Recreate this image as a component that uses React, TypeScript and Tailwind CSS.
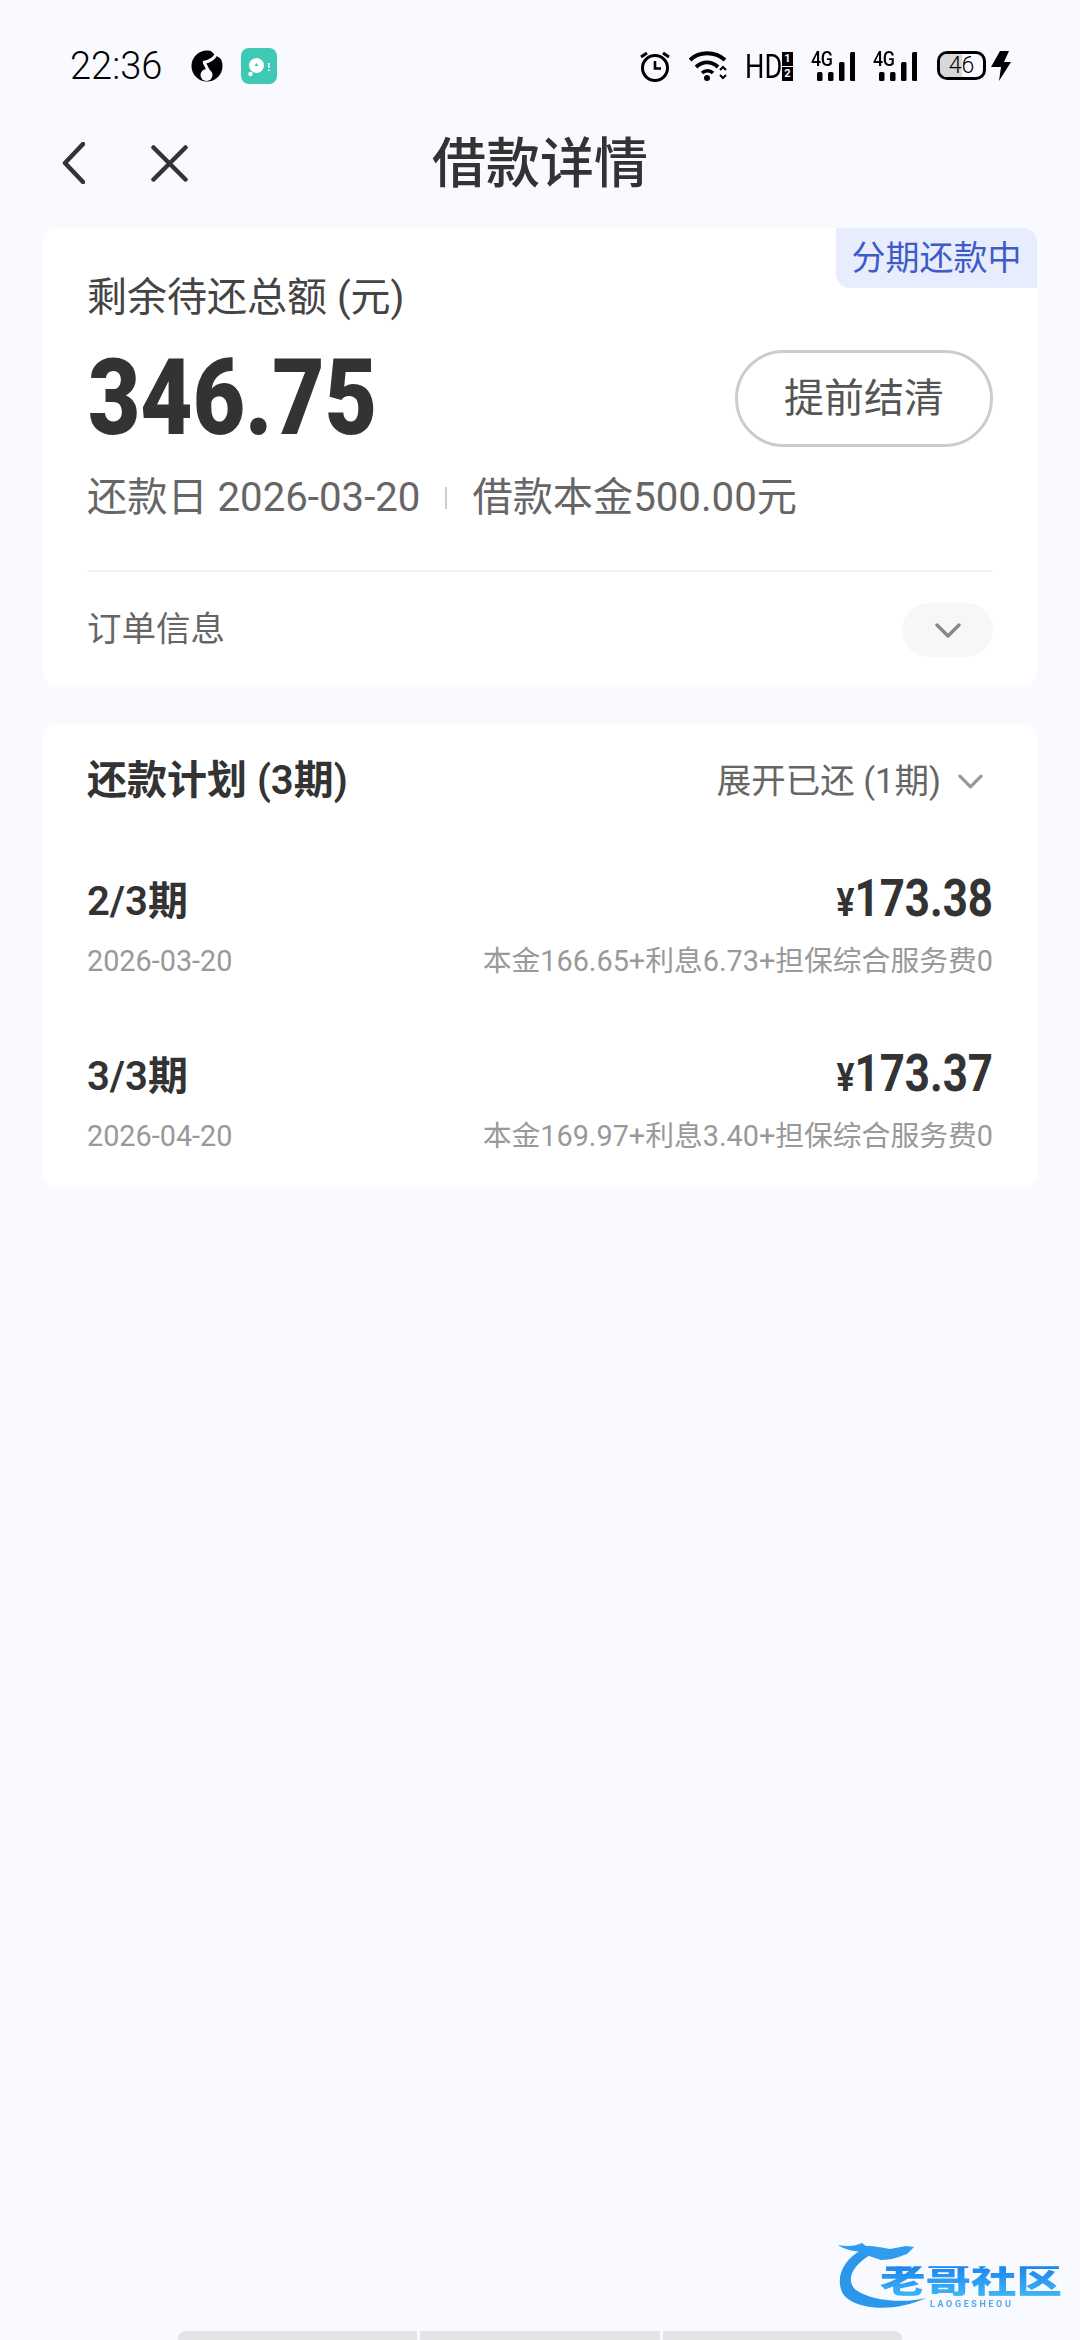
const font = "font-['Roboto','Noto_Sans_CJK_SC',sans-serif]";

function Signal() {
  return (
    <div className="relative w-[44px] h-[30px]">
      <span className="absolute left-0 top-[-3px] text-[21px] leading-[22px] font-medium tracking-[-0.5px] scale-x-[0.85] origin-left text-black">4G</span>
      <svg width="44" height="30" viewBox="0 0 44 30" className="absolute left-0 top-0">
        <rect x="6" y="21" width="5.5" height="9" rx="1.5" fill="#000" />
        <rect x="17" y="21" width="5.5" height="9" rx="1.5" fill="#000" />
        <rect x="28" y="11" width="5.5" height="19" rx="1.5" fill="#000" />
        <rect x="39" y="1" width="5.5" height="29" rx="1.5" fill="#000" />
      </svg>
    </div>
  );
}

function StatusBar() {
  return (
    <div className="h-[132px] pl-[70px] pr-[69px] pt-[48px] flex items-start justify-between text-black">
      <div className="flex items-center h-[36px]">
        <span className="w-[121px] text-[38px] leading-[36px] font-light">22:36</span>
        <svg width="32" height="32" viewBox="0 0 32 32">
          <circle cx="16" cy="16" r="15.5" fill="#000" />
          <path d="M19 0h13v10L24 5z" fill="#f8faff" />
          <path d="M12 12.5C18 12 23 9 26 3" fill="none" stroke="#f8faff" strokeWidth="3" />
          <path d="M13 12l6.5 13" fill="none" stroke="#f8faff" strokeWidth="3" />
          <circle cx="15.5" cy="25" r="6" fill="#f8faff" />
        </svg>
        <div className="ml-[18px] w-[36px] h-[36px] rounded-[8px] bg-[#3ec9b5]">
          <svg width="36" height="36" viewBox="0 0 36 36">
            <circle cx="15.5" cy="17.5" r="7.5" fill="#fff" />
            <path d="M13.5 18l2-3 2 3z" fill="#3ec9b5" />
            <circle cx="9.5" cy="26" r="2.2" fill="#fff" />
            <rect x="27" y="15" width="1.6" height="5" fill="#fff" />
            <rect x="27" y="21.5" width="1.6" height="1.6" fill="#fff" />
          </svg>
        </div>
      </div>
      <div className="flex items-start h-[36px] pt-[3px]">
        <svg width="30" height="31" viewBox="0 0 30 31" fill="none" stroke="#000" strokeWidth="3">
          <circle cx="15" cy="17" r="12.5" />
          <path d="M15 10v7.5h6" strokeWidth="2.6" />
          <path d="M1 6l6-4M29 6l-6-4" strokeWidth="3" />
        </svg>
        <svg width="40" height="30" viewBox="0 0 40 30" fill="none" stroke="#000" className="ml-[19px]">
          <path d="M1 9C10 0 26 0 36 9" strokeWidth="4" />
          <path d="M7 16C14 10 22 10 29 16" strokeWidth="4" />
          <path d="M13 22c3-3 8-3 11 0" strokeWidth="3.5" />
          <circle cx="18" cy="27" r="3" fill="#000" stroke="none" />
          <path d="M31 19l3-3 3 3M31 24l3 3 3-3" strokeWidth="2" />
        </svg>
        <div className="ml-[16px] w-[48px] h-[30px] flex items-center">
          <span className="w-[37px] text-[34px] leading-[30px] font-normal scale-x-[0.8] origin-left">HD</span>
          <div className="w-[11px] flex flex-col gap-[1px]">
            <span className="h-[14px] bg-black text-white text-[11px] leading-[14px] font-bold text-center">1</span>
            <span className="h-[14px] bg-black text-white text-[11px] leading-[14px] font-bold text-center">2</span>
          </div>
        </div>
        <div className="ml-[18px]"><Signal /></div>
        <div className="ml-[18px]"><Signal /></div>
        <div className="ml-[20px] relative w-[49px] h-[29px] rounded-[10px] border-[3px] border-black overflow-hidden flex items-center justify-center">
          <div className="absolute left-0 top-0 bottom-0 w-[22px] bg-[#d8d8d8]" />
          <span className="relative text-[23px] leading-[23px] font-light">46</span>
        </div>
        <svg width="20" height="30" viewBox="0 0 20 30" className="ml-[5px]">
          <path d="M9 0h9l-5 11h7L8 30l2-14H0z" fill="#000" />
        </svg>
      </div>
    </div>
  );
}

function NavBar() {
  return (
    <div className="relative h-[96px] flex justify-center">
      <div className="absolute left-[62px] top-[10px] flex items-center gap-[66px]">
        <svg width="23" height="42" viewBox="0 0 23 42" fill="none" stroke="#333" strokeWidth="4.5" strokeLinecap="round" strokeLinejoin="round">
          <path d="M21 2L3 21l18 19" />
        </svg>
        <svg width="37" height="37" viewBox="0 0 37 37" fill="none" stroke="#333" strokeWidth="4.5" strokeLinecap="round">
          <path d="M2.5 2.5l32 32M34.5 2.5l-32 32" />
        </svg>
      </div>
      <h1 className="text-[54px] leading-[66px] font-medium text-[#333]">借款详情</h1>
    </div>
  );
}

function Chevron({ color, width, height }: { color: string; width: number; height: number }) {
  return (
    <svg width={width} height={height} viewBox="0 0 26 15" fill="none" stroke={color} strokeWidth="3.4" strokeLinecap="round" strokeLinejoin="round">
      <path d="M2 2l11 11L24 2" />
    </svg>
  );
}

function SummaryCard() {
  return (
    <div className="relative mx-[43px] h-[459px] rounded-[14px] bg-white px-[44px] overflow-hidden">
      <div className="absolute right-0 top-0 w-[201px] h-[60px] bg-[#e8edfd] rounded-bl-[14px] flex items-center justify-center text-[34px] leading-[40px] text-[#3f5bc9]">
        分期还款中
      </div>
      <div className="pt-[47px] text-[40px] leading-[46px] text-[#444]">剩余待还总额 (元)</div>
      <div className="flex items-center justify-between mt-[29px]">
        <span className="text-[105px] leading-[97px] font-black text-[#333] scale-x-[0.86] origin-left translate-x-[1px]">346.75</span>
        <button className="w-[258px] h-[97px] rounded-full border-[3px] border-[#ccc] text-[40px] text-[#555]">
          提前结清
        </button>
      </div>
      <div className="flex items-center mt-[28px] h-[46px] text-[40.2px] text-[#666]">
        <span>还款日 2026-03-20</span>
        <span className="mx-[25px] w-[2px] h-[22px] bg-[#ccc]" />
        <span>借款本金500.00元</span>
      </div>
      <div className="mt-[49px] h-[2px] bg-[#f0f0f0]" />
      <div className="flex items-center justify-between mt-[31px]">
        <span className="text-[34.5px] leading-[52px] text-[#666] -translate-y-[1px]">订单信息</span>
        <div className="w-[91px] h-[54px] rounded-full bg-[#f7f7f7] flex items-center justify-center">
          <Chevron color="#888" width={26} height={15} />
        </div>
      </div>
    </div>
  );
}

const plans = [
  { period: "2/3期", amount: "173.38", date: "2026-03-20", detail: "本金166.65+利息6.73+担保综合服务费0" },
  { period: "3/3期", amount: "173.37", date: "2026-04-20", detail: "本金169.97+利息3.40+担保综合服务费0" },
];

function PlanCard() {
  return (
    <div className="mx-[43px] mt-[37px] h-[463px] rounded-[14px] bg-white px-[44px]">
      <div className="flex items-center justify-between pt-[34px] h-[80px]">
        <span className="text-[40px] leading-[46px] font-semibold text-[#333]">还款计划 (3期)</span>
        <div className="flex items-center text-[34.5px] leading-[46px] text-[#666]">
          <span>展开已还 (1期)</span>
          <span className="ml-[17px] mr-[10px]"><Chevron color="#999" width={25} height={15} /></span>
        </div>
      </div>
      {plans.map((p, i) => (
        <div key={p.period} className={i === 0 ? "mt-[67px]" : "mt-[61px]"}>
          <div className="flex items-center justify-between h-[50px]">
            <span className="text-[40px] font-semibold text-[#333] translate-y-[6px]">{p.period}</span>
            <span className="text-[51px] font-bold text-[#333] scale-x-[0.86] origin-right translate-y-[3px]">
              <span className="text-[39px]">¥</span>
              {p.amount}
            </span>
          </div>
          <div className="flex items-center justify-between h-[40px] mt-[21px] text-[28.8px] text-[#999]">
            <span>{p.date}</span>
            <span>{p.detail}</span>
          </div>
          <div className="h-[3px]" />
        </div>
      ))}
    </div>
  );
}

function Watermark() {
  return (
    <div className="absolute left-[838px] top-[2242px] w-[226px] h-[70px] blur-[0.6px]">
      <svg width="120" height="70" viewBox="0 0 120 70" className="absolute left-0 top-0">
        <path d="M24 8C7 16 -3 34 4 50c8 17 50 22 84 6-26 6-56 2-70-8C8 40 12 24 34 12z" fill="#2b97ea" />
        <path d="M0 3c10 2 18 1 24-2l4 3c12 0 16 2 24 3l16-3 8 1-7 7c-8 3-16 6-26 6l-12-4-8-4C14 9 6 7 0 3z" fill="#2f9cf0" />
      </svg>
      <span className="absolute left-[42px] top-[20px] whitespace-nowrap text-[45.5px] leading-[38px] font-black scale-y-[0.78] bg-linear-to-b from-[#1d85ee] to-[#3fb4f7] bg-clip-text text-transparent">老哥社区</span>
      <span className="absolute left-[92px] top-[57px] whitespace-nowrap text-[9px] leading-[10px] font-bold tracking-[2.6px] text-[#5aa6e6]">LAOGESHEOU</span>
    </div>
  );
}

export default function App() {
  return (
    <div className={`relative w-[1080px] h-[2340px] flex flex-col bg-[#f8faff] overflow-hidden ${font}`}>
      <StatusBar />
      <NavBar />
      <SummaryCard />
      <PlanCard />
      <Watermark />
      <div className="mt-auto mx-[178px] h-[9px] flex gap-[3px]">
        <div className="flex-1 rounded-tl-[8px] bg-[#e3e4e6]" />
        <div className="flex-1 bg-[#e3e4e6]" />
        <div className="flex-1 rounded-tr-[8px] bg-[#e3e4e6]" />
      </div>
    </div>
  );
}
